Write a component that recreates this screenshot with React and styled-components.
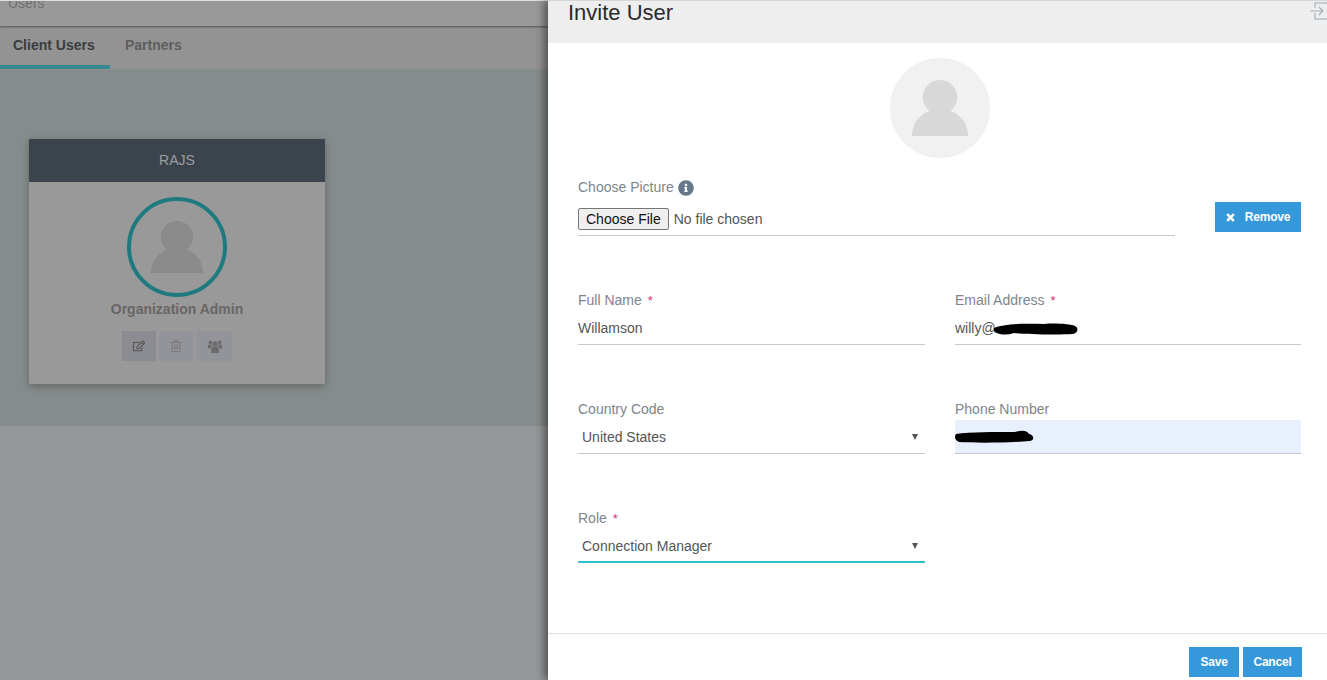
import React from "react";
import styled, { createGlobalStyle } from "styled-components";
import { FaRegEdit, FaRegTrashAlt, FaInfoCircle } from "react-icons/fa";

const Global = createGlobalStyle`
  html, body { margin: 0; padding: 0; height: 100%; overflow: hidden; }
  body { font-family: "Liberation Sans", Arial, sans-serif; font-size: 14px; }
  * { box-sizing: border-box; }
`;

const Page = styled.div`
  display: flex;
  width: 1327px;
  height: 680px;
  overflow: hidden;
  background: #959799;
`;
const Backdrop = styled.div`
  width: 548px;
  flex: none;
  display: flex;
  flex-direction: column;
  border-top: 1px solid #e6e6e6;
`;
const TopBar = styled.div`
  height: 25px;
  flex: none;
  background: #999999;
  box-shadow: 0 1px 2px rgba(0, 0, 0, 0.45);
  overflow: hidden;
  padding-left: 8px;
  color: #707070;
  font-size: 14px;
  line-height: 14px;
  position: relative;
`;
const TopText = styled.div`
  margin-top: -5px;
`;
const Tabs = styled.div`
  height: 44px;
  flex: none;
  display: flex;
  background: #939393;
  border-bottom: 1px solid #8b8e8e;
`;
const Tab = styled.div`
  width: ${(p) => p.$w}px;
  padding-left: ${(p) => p.$pad}px;
  font-weight: 700;
  font-size: 14px;
  line-height: 38px;
  color: ${(p) => (p.$active ? "#3a3d40" : "#5e5e5e")};
  border-bottom: ${(p) => (p.$active ? "4px solid #35898f" : "none")};
`;
const TealArea = styled.div`
  height: 356px;
  flex: none;
  background: #868c8b;
  padding: 69px 0 0 29px;
`;
const Card = styled.div`
  width: 296px;
  height: 245px;
  background: #999999;
  box-shadow: 0 2px 8px rgba(0, 0, 0, 0.28);
  display: flex;
  flex-direction: column;
  align-items: center;
`;
const CardHead = styled.div`
  width: 100%;
  height: 43px;
  background: #3b444c;
  color: #999da1;
  text-align: center;
  line-height: 43px;
  font-size: 14px;
`;
const Ring = styled.div`
  width: 100px;
  height: 100px;
  margin-top: 15px;
  border-radius: 50%;
  border: 4px solid #1f7a80;
  display: flex;
  align-items: center;
  justify-content: center;
`;
const CardName = styled.div`
  margin-top: 4px;
  font-weight: 700;
  font-size: 14px;
  line-height: 16px;
  color: #696564;
`;
const CardActions = styled.div`
  display: flex;
  margin-top: 14px;
  gap: 3px;
`;
const CardAction = styled.div`
  width: ${(p) => p.$w}px;
  height: 30px;
  margin-left: ${(p) => p.$ml || 0}px;
  background: ${(p) => p.$bg};
  color: ${(p) => p.$fg};
  display: flex;
  align-items: center;
  justify-content: center;
  font-size: 12px;
`;
const Drawer = styled.div`
  flex: 1;
  height: 680px;
  background: #fff;
  display: flex;
  flex-direction: column;
  box-shadow: -4px 0 8px rgba(0, 0, 0, 0.45);
  position: relative;
`;
const DrawerHead = styled.div`
  height: 43px;
  flex: none;
  background: #eeeeee;
  border-top: 1px solid #d5d5d5;
  padding: 1px 0 0 20px;
  position: relative;
`;
const Title = styled.div`
  font-size: 22px;
  line-height: 22px;
  color: #2b2b2b;
`;
const CloseIcon = styled.svg`
  position: absolute;
  top: 0;
  right: 0;
`;
const Body = styled.div`
  flex: 1;
  padding: 15px 26px 0 30px;
  display: flex;
  flex-direction: column;
`;
const AvatarWrap = styled.div`
  align-self: center;
  width: 100px;
  height: 100px;
  border-radius: 50%;
  background: #f1f1f1;
  display: flex;
  align-items: center;
  justify-content: center;
`;
const PictureBlock = styled.div`
  display: flex;
  align-items: flex-end;
  justify-content: space-between;
  margin-top: 20px;
`;
const PictureLeft = styled.div`
  width: 597px;
`;
const Label = styled.label`
  display: flex;
  align-items: center;
  height: 18px;
  font-size: 14px;
  color: #7d858c;
`;
const Star = styled.span`
  color: #d9326f;
  margin-left: 6px;
  font-size: 13px;
`;
const InfoBadge = styled.span`
  margin: 1px 0 0 4px;
  display: flex;
  color: #67788a;
  font-size: 16px;
`;
const FileInput = styled.input`
  display: block;
  width: 100%;
  height: 28px;
  margin-top: 12px;
  padding: 0;
  font-family: "Liberation Sans", Arial, sans-serif;
  font-size: 14px;
  color: #555;
  border: 0;
  border-bottom: 1px solid #c2c9d1;
  &::file-selector-button {
    font-family: "Liberation Sans", Arial, sans-serif;
    font-size: 14px;
    color: #111;
    height: 22px;
    padding: 0 7px;
    background: #efefef;
    border: 1px solid #767676;
    border-radius: 2px;
    margin-right: 5px;
  }
`;
const Button = styled.button`
  height: 30px;
  width: ${(p) => p.$w}px;
  border: 0;
  padding: 0;
  background: #3498db;
  color: #fff;
  font-family: "Liberation Sans", Arial, sans-serif;
  font-weight: 700;
  font-size: 12px;
  letter-spacing: -0.2px;
  display: flex;
  align-items: center;
  justify-content: center;
  gap: 10px;
`;
const RemoveButton = styled(Button)`
  margin-bottom: 4px;
`;
const Grid = styled.div`
  display: grid;
  grid-template-columns: 347px 346px;
  column-gap: 30px;
  row-gap: 55px;
  margin-top: 55px;
`;
const Field = styled.div`
  display: flex;
  flex-direction: column;
  position: relative;
`;
const TextInput = styled.input`
  width: 100%;
  height: 34px;
  margin-top: 2px;
  border: 0;
  border-bottom: 1px solid #c2c9d1;
  outline: none;
  padding: 0;
  font-family: "Liberation Sans", Arial, sans-serif;
  font-size: 14px;
  color: #555;
  background: ${(p) => p.$bg || "#fff"};
`;
const SelectBox = styled.div`
  height: 34px;
  margin-top: 2px;
  padding: ${(p) => (p.$focus ? 1 : 0)}px 7px 0 4px;
  display: flex;
  align-items: center;
  justify-content: space-between;
  font-size: 14px;
  color: #555;
  border-bottom: ${(p) => (p.$focus ? "2px solid #2fc1cf" : "1px solid #c2c9d1")};
`;
const Caret = styled.span`
  width: 0;
  height: 0;
  border-left: 3px solid transparent;
  border-right: 3px solid transparent;
  border-top: 6px solid #555;
`;
const Scribble = styled.svg`
  position: absolute;
  left: ${(p) => p.$x}px;
  top: ${(p) => p.$y}px;
`;
const Footer = styled.div`
  height: 47px;
  flex: none;
  border-top: 1px solid #dfdfdf;
  display: flex;
  justify-content: flex-end;
  align-items: flex-start;
  gap: 4px;
  padding: 13px 25px 0 0;
`;

const Person = ({ fill, size }) => (
  <svg width={size} height={size} viewBox="0 0 52 52">
    <circle cx="26" cy="16" r="16" fill={fill} />
    <path d="M0 52 C0 37 12 27 26 27 C40 27 52 37 52 52 Z" fill={fill} />
  </svg>
);

const UsersGlyph = () => (
  <svg width="14" height="13" viewBox="0 0 14 13" fill="currentColor">
    <circle cx="7" cy="3.8" r="2.6" />
    <circle cx="2.4" cy="2.4" r="1.8" />
    <circle cx="11.6" cy="2.4" r="1.8" />
    <path d="M3.2 13 V8.6 C3.2 7.2 4.4 6.8 5.4 6.8 H8.6 C9.6 6.8 10.8 7.2 10.8 8.6 V13 Z" />
    <path d="M0 8.6 V6 C0 5 .8 4.6 1.6 4.6 H3.4 C3.6 5.4 4 6 4.4 6.4 C3 6.6 2.4 7.4 2.4 8.6 Z" />
    <path d="M14 8.6 V6 C14 5 13.2 4.6 12.4 4.6 H10.6 C10.4 5.4 10 6 9.6 6.4 C11 6.6 11.6 7.4 11.6 8.6 Z" />
  </svg>
);

const CrossGlyph = () => (
  <svg width="9" height="9" viewBox="0 0 9 9">
    <path d="M1.2 1.2 L7.8 7.8 M7.8 1.2 L1.2 7.8" stroke="#fff" strokeWidth="2.6" />
  </svg>
);

export default function App() {
  return (
    <Page>
      <Global />
      <Backdrop>
        <TopBar>
          <TopText>Users</TopText>
        </TopBar>
        <Tabs>
          <Tab $w={110} $pad={13} $active>Client Users</Tab>
          <Tab $w={100} $pad={15}>Partners</Tab>
        </Tabs>
        <TealArea>
          <Card>
            <CardHead>RAJS</CardHead>
            <Ring>
              <Person fill="#8a8a8a" size={52} />
            </Ring>
            <CardName>Organization Admin</CardName>
            <CardActions>
              <CardAction $w={34} $bg="#8b8c92" $fg="#55514e"><FaRegEdit /></CardAction>
              <CardAction $w={34} $bg="#93949a" $fg="#7a7a7a"><FaRegTrashAlt /></CardAction>
              <CardAction $w={35} $ml={1} $bg="#93949a" $fg="#6a6a6a"><UsersGlyph /></CardAction>
            </CardActions>
          </Card>
        </TealArea>
      </Backdrop>
      <Drawer>
        <DrawerHead>
          <Title>Invite User</Title>
          <CloseIcon width="18" height="19" viewBox="0 0 18 19" fill="none">
            <path d="M6 7 V2 H18 M6 12 V18 H18" stroke="#b4bfc9" strokeWidth="1.5" />
            <path d="M1 10 H14 M10 6 L14 10 L10 14" stroke="#a6b0ba" strokeWidth="1.2" />
          </CloseIcon>
        </DrawerHead>
        <Body>
          <AvatarWrap>
            <Person fill="#d8d8d8" size={56} />
          </AvatarWrap>
          <PictureBlock>
            <PictureLeft>
              <Label>
                Choose Picture
                <InfoBadge><FaInfoCircle /></InfoBadge>
              </Label>
              <FileInput type="file" />
            </PictureLeft>
            <RemoveButton $w={86}>
              <CrossGlyph />
              Remove
            </RemoveButton>
          </PictureBlock>
          <Grid>
            <Field>
              <Label>Full Name<Star>*</Star></Label>
              <TextInput readOnly value="Willamson" />
            </Field>
            <Field>
              <Label>Email Address<Star>*</Star></Label>
              <TextInput readOnly value="willy@" />
              <Scribble $x={39} $y={32} width="84" height="12" viewBox="0 0 84 12">
                <path d="M0 5 C8 1 28 0 50 1 C62 0 76 1 81 3 C85 5 84 10 79 11 C60 12 30 11 20 10 C14 12 8 12 3 10 C0 9 -1 7 0 5 Z" fill="#000" />
              </Scribble>
            </Field>
            <Field>
              <Label>Country Code</Label>
              <SelectBox>United States<Caret /></SelectBox>
            </Field>
            <Field>
              <Label>Phone Number</Label>
              <TextInput readOnly value="" $bg="#e8f0fe" />
              <Scribble $x={0} $y={30} width="79" height="13" viewBox="0 0 79 13">
                <path d="M1 4 C15 2 40 2 60 2 C66 0 72 0 74 4 C79 5 80 10 75 11 C50 13 20 13 4 12 C0 10 -1 7 1 4 Z" fill="#000" />
              </Scribble>
            </Field>
            <Field>
              <Label>Role<Star>*</Star></Label>
              <SelectBox $focus>Connection Manager<Caret /></SelectBox>
            </Field>
          </Grid>
        </Body>
        <Footer>
          <Button $w={50}>Save</Button>
          <Button $w={59}>Cancel</Button>
        </Footer>
      </Drawer>
    </Page>
  );
}
